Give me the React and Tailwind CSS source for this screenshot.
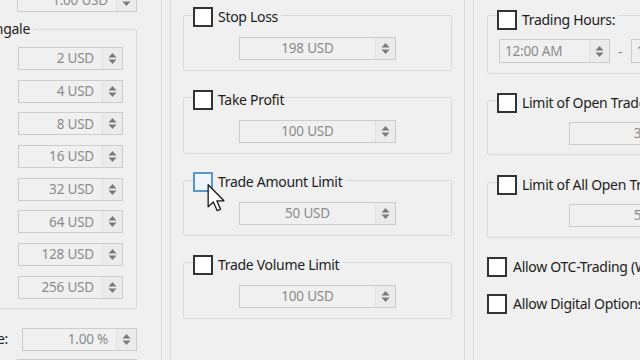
import React from "react";

const FONT = { fontFamily: '"Noto Sans", "Open Sans", sans-serif' };

function Arrows({ downOnly = false }) {
  return (
    <svg width="9" height="13" viewBox="0 0 9 13" className="shrink-0">
      {!downOnly && <path d="M0.5 5.5 L4.5 1 L8.5 5.5 Z" fill="#7a7a7a" />}
      <path d="M0.5 7.5 L4.5 12 L8.5 7.5 Z" fill="#7a7a7a" />
    </svg>
  );
}

const ALIGN = {
  right: "justify-end pr-[8px]",
  center: "justify-center",
  left: "justify-start pl-[5px]",
};

function Spin({ value, align = "right", downOnly = false, className = "" }) {
  return (
    <div className={`flex h-[23px] shrink-0 items-stretch border border-[#cccccc] bg-[#f0f0f0] ${className}`}>
      <div
        className={`flex min-w-0 flex-1 items-center overflow-hidden whitespace-nowrap text-[13.5px] tracking-[-0.2px] text-[#8b8b8b] ${ALIGN[align]}`}
      >
        {value}
      </div>
      <div className="flex w-[20px] shrink-0 items-center justify-center border-l border-[#e3e3e3] bg-[#ebebeb]">
        <Arrows downOnly={downOnly} />
      </div>
    </div>
  );
}

function Check({ hover = false }) {
  return (
    <div
      className={`h-[20px] w-[20px] shrink-0 border-2 ${
        hover ? "border-[#5b95c9] bg-[#eef5fc]" : "border-[#333333] bg-white"
      }`}
    />
  );
}

function Label({ children }) {
  return (
    <span className="whitespace-nowrap text-[14px] leading-[20px] tracking-[-0.3px] text-[#1c1c1c]">{children}</span>
  );
}

function Group({ label, hover, shift = "mt-0", className = "", children }) {
  return (
    <fieldset className={`rounded-[2px] border border-[#d9d9d9] pl-[9px] ${className}`}>
      <legend className="h-[16px] pr-[3px]">
        <div className={`flex h-[20px] items-center gap-[5px] ${shift}`}>
          <Check hover={hover} />
          <Label>{label}</Label>
        </div>
      </legend>
      {children}
    </fieldset>
  );
}

const MARTINGALE = ["2 USD", "4 USD", "8 USD", "16 USD", "32 USD", "64 USD", "128 USD", "256 USD"];

function Cursor() {
  return (
    <svg
      className="pointer-events-none absolute left-[207px] top-[184px]"
      width="20"
      height="28"
      viewBox="0 0 13 19"
    >
      <path
        d="M0.5 0.5 L0.5 15.5 L4 12.2 L6.6 18 L8.9 17 L6.4 11.4 L11.2 11.4 Z"
        fill="#ffffff"
        stroke="#1a1a1a"
        strokeWidth="0.9"
        strokeLinejoin="round"
      />
    </svg>
  );
}

export default function App() {
  return (
    <div className="relative flex h-[360px] w-[640px] overflow-hidden bg-[#f0f0f0]" style={FONT}>
      {/* left panel */}
      <div className="flex w-[162px] shrink-0 flex-col overflow-hidden border-r border-[#dadada]">
        <Spin value="1.00 USD" downOnly className="ml-[17px] mt-[-11px] w-[120px]" />

        <fieldset className="ml-[-50px] mt-[9px] w-[187px] rounded-[2px] border border-[#d9d9d9] pb-[9px]">
          <legend className="h-[16px] w-[82px]">
            <div className="flex h-[16px] items-center justify-end pr-[3px]">
              <Label>Martingale</Label>
            </div>
          </legend>
          <div className="ml-[67px] mt-[10px] flex flex-col gap-[9.67px]">
            {MARTINGALE.map((v) => (
              <Spin key={v} value={v} className="w-[105px]" />
            ))}
          </div>
        </fieldset>

        <div className="mt-[19px] flex items-center">
          <div className="flex w-[22px] shrink-0 justify-end pr-[14px]">
            <Label>Rate:</Label>
          </div>
          <Spin value="1.00 %" className="w-[115px]" />
        </div>

        <Spin value="1.00" className="ml-[17px] mt-[8px] w-[120px]" />
      </div>

      {/* middle panel */}
      <div className="ml-[8px] flex w-[295px] shrink-0 flex-col gap-[18.5px] border-x border-[#dadada] px-[12px] pt-[7px]">
        <Group label="Stop Loss" className="w-[269px] pb-[10px]">
          <Spin value="198 USD" align="center" className="ml-[46px] mt-[14px] w-[157px]" />
        </Group>
        <Group label="Take Profit" className="w-[269px] pb-[10px]">
          <Spin value="100 USD" align="center" className="ml-[46px] mt-[14px] w-[157px]" />
        </Group>
        <Group label="Trade Amount Limit" hover className="w-[269px] pb-[10px]">
          <Spin value="50 USD" align="center" className="ml-[46px] mt-[14px] w-[157px]" />
        </Group>
        <Group label="Trade Volume Limit" className="w-[269px] pb-[10px]">
          <Spin value="100 USD" align="center" className="ml-[46px] mt-[14px] w-[157px]" />
        </Group>
      </div>

      {/* right panel */}
      <div className="ml-[8px] flex w-[240px] shrink-0 flex-col border-l border-[#dadada] pl-[13px] pt-[7px]">
        <Group label="Trading Hours:" shift="mt-[3px]" className="w-[220px] pb-[10px]">
          <div className="ml-[2px] mt-[16px] flex items-center">
            <Spin value="12:00 AM" align="left" className="h-[24px] w-[111px]" />
            <span className="mx-[8px] text-[14px] text-[#8b8b8b]">-</span>
            <Spin value="11:59 PM" align="left" className="h-[24px] w-[111px]" />
          </div>
        </Group>

        <Group label="Limit of Open Trades" shift="mt-[1px]" className="mt-[18px] w-[220px] pb-[9px]">
          <Spin value="3" align="center" className="ml-[72px] mt-[14px] w-[157px]" />
        </Group>

        <Group label="Limit of All Open Trades" shift="mt-[1px]" className="mt-[19px] w-[220px] pb-[10px]">
          <Spin value="5" align="center" className="ml-[72px] mt-[14px] w-[157px]" />
        </Group>

        <div className="mt-[19px] flex items-center gap-[6px]">
          <Check />
          <Label>Allow OTC-Trading (Weekend)</Label>
        </div>
        <div className="mt-[17px] flex items-center gap-[6px]">
          <Check />
          <Label>Allow Digital Options</Label>
        </div>
      </div>

      <Cursor />
    </div>
  );
}
